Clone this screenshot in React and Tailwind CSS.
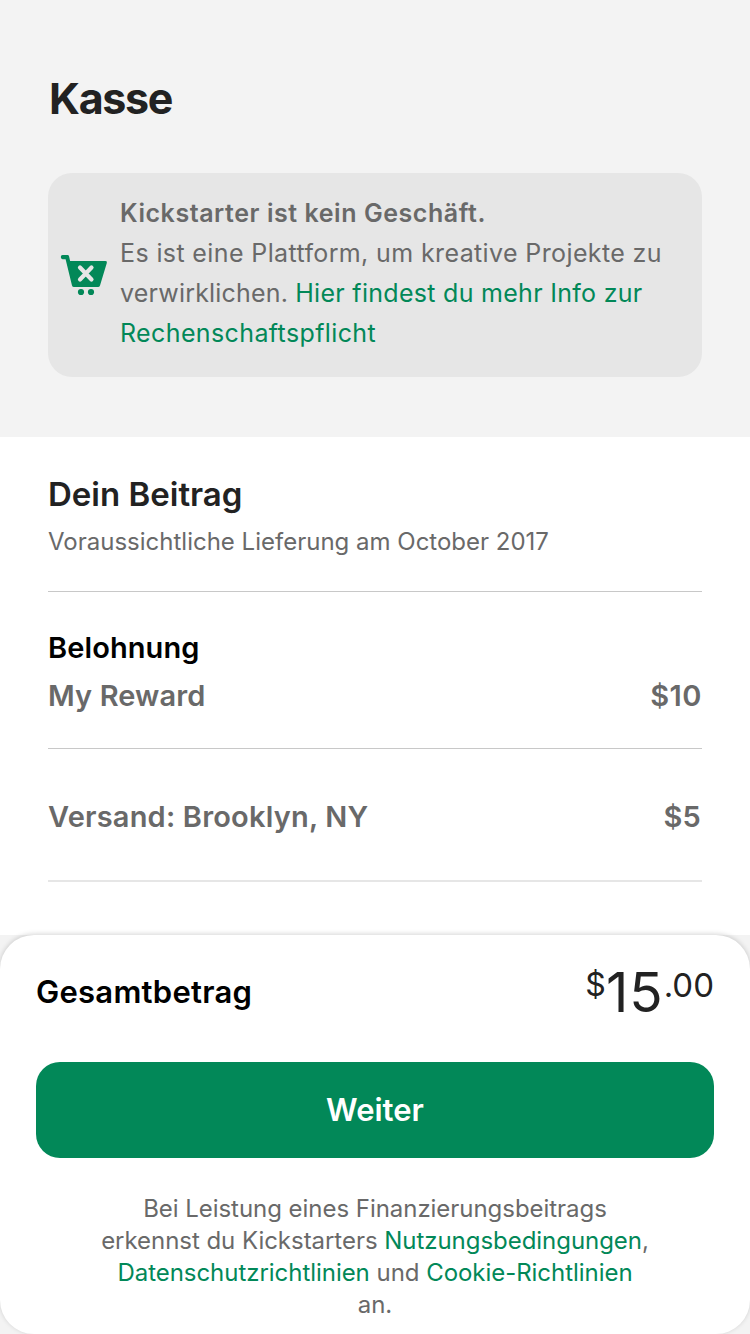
export default function App() {
  return (
    <div className="flex h-[1334px] w-[750px] flex-col overflow-hidden bg-[#f3f3f3] font-['Inter',sans-serif] text-[#696969]">
      <header className="h-[437px] px-12 pt-[68px]">
        <h1 className="pl-px text-[43px] leading-[60px] font-bold tracking-[-1.3px] text-[#222]">Kasse</h1>
        <div className="mt-[45px] flex h-[204px] items-center rounded-3xl bg-[#e6e6e6] pl-3">
          <svg className="h-[42px] w-[48px] shrink-0" viewBox="0 0 48 42" fill="none">
            <path d="M2.5 1H7.5Q8.8 1 9.1 2.4L10.1 7H45.5Q47.5 7 46.8 9L40 31.5Q39.5 33 38 33H14Q12.4 33 12 31.5L5.6 5.2H2.5Q.8 5 .8 3T2.5 1Z" fill="#028858" />
            <path d="M20 13.5L31.5 25.5M31.5 13.5L20 25.5" stroke="#e6e6e6" strokeWidth="4.2" strokeLinecap="round" />
            <circle cx="21" cy="38" r="3.1" fill="#028858" />
            <circle cx="31" cy="38" r="3.1" fill="#028858" />
          </svg>
          <p className="ml-3 pb-1 text-[25px] leading-10 tracking-[0.38px] whitespace-nowrap">
            <b className="font-semibold tracking-[0.56px]">Kickstarter ist kein Geschäft.</b><br />
            Es ist eine Plattform, um kreative Projekte zu<br />
            <span className="tracking-[0.18px]">verwirklichen. </span>
            <a className="text-[#028858]"><span className="tracking-[0.29px]">Hier findest du mehr Info zur</span><br />Rechenschaftspflicht</a>
          </p>
        </div>
      </header>
      <main className="h-[498px] bg-white px-12 pt-[33px]">
        <h2 className="text-[33px] leading-[48px] font-semibold text-[#222]">Dein Beitrag</h2>
        <p className="mt-2 text-[24px] leading-8">Voraussichtliche Lieferung am October 2017</p>
        <section className="mt-[33px] h-[157px] border-t border-[#c8c8c8] pt-[36px] text-[29px] leading-10 font-semibold tracking-[0.1px]">
          <h3 className="text-black">Belohnung</h3>
          <div className="mt-2 flex justify-between"><span>My Reward</span><span className="tracking-[0.5px]">$10</span></div>
        </section>
        <section className="flex h-[134px] items-center justify-between border-t border-b-2 border-t-[#c8c8c8] border-b-[#e6e6e6] pt-[5px] text-[29px] font-semibold tracking-[0.2px]">
          <span>Versand: Brooklyn, NY</span><span className="pr-px">$5</span>
        </section>
      </main>
      <footer className="h-[399px] rounded-[34px] bg-white px-9 pt-[28px] shadow-[0_-1px_5px_rgba(0,0,0,0.17)]">
        <div className="flex h-[58px] justify-between">
          <h2 className="text-[31px] leading-[58px] font-semibold tracking-[0.25px] text-black">Gesamtbetrag</h2>
          <div className="flex text-[#222]">
            <span className="text-[32px] leading-[44px]">$</span>
            <span className="text-[55px] leading-[58px] tracking-[1px]">15</span>
            <span className="text-[33px] leading-[44px]">.00</span>
          </div>
        </div>
        <button className="mt-[41px] h-24 w-full rounded-3xl bg-[#028858] text-[31px] font-semibold text-white">Weiter</button>
        <p className="mt-[35px] text-center text-[24px] leading-8 tracking-[-0.04px]">
          Bei Leistung eines Finanzierungsbeitrags<br />erkennst du Kickstarters <a className="text-[#028858]">Nutzungsbedingungen</a>,<br />
          <a className="text-[#028858]">Datenschutzrichtlinien</a> und <a className="text-[#028858]">Cookie-Richtlinien</a><br />an.
        </p>
      </footer>
    </div>
  );
}
